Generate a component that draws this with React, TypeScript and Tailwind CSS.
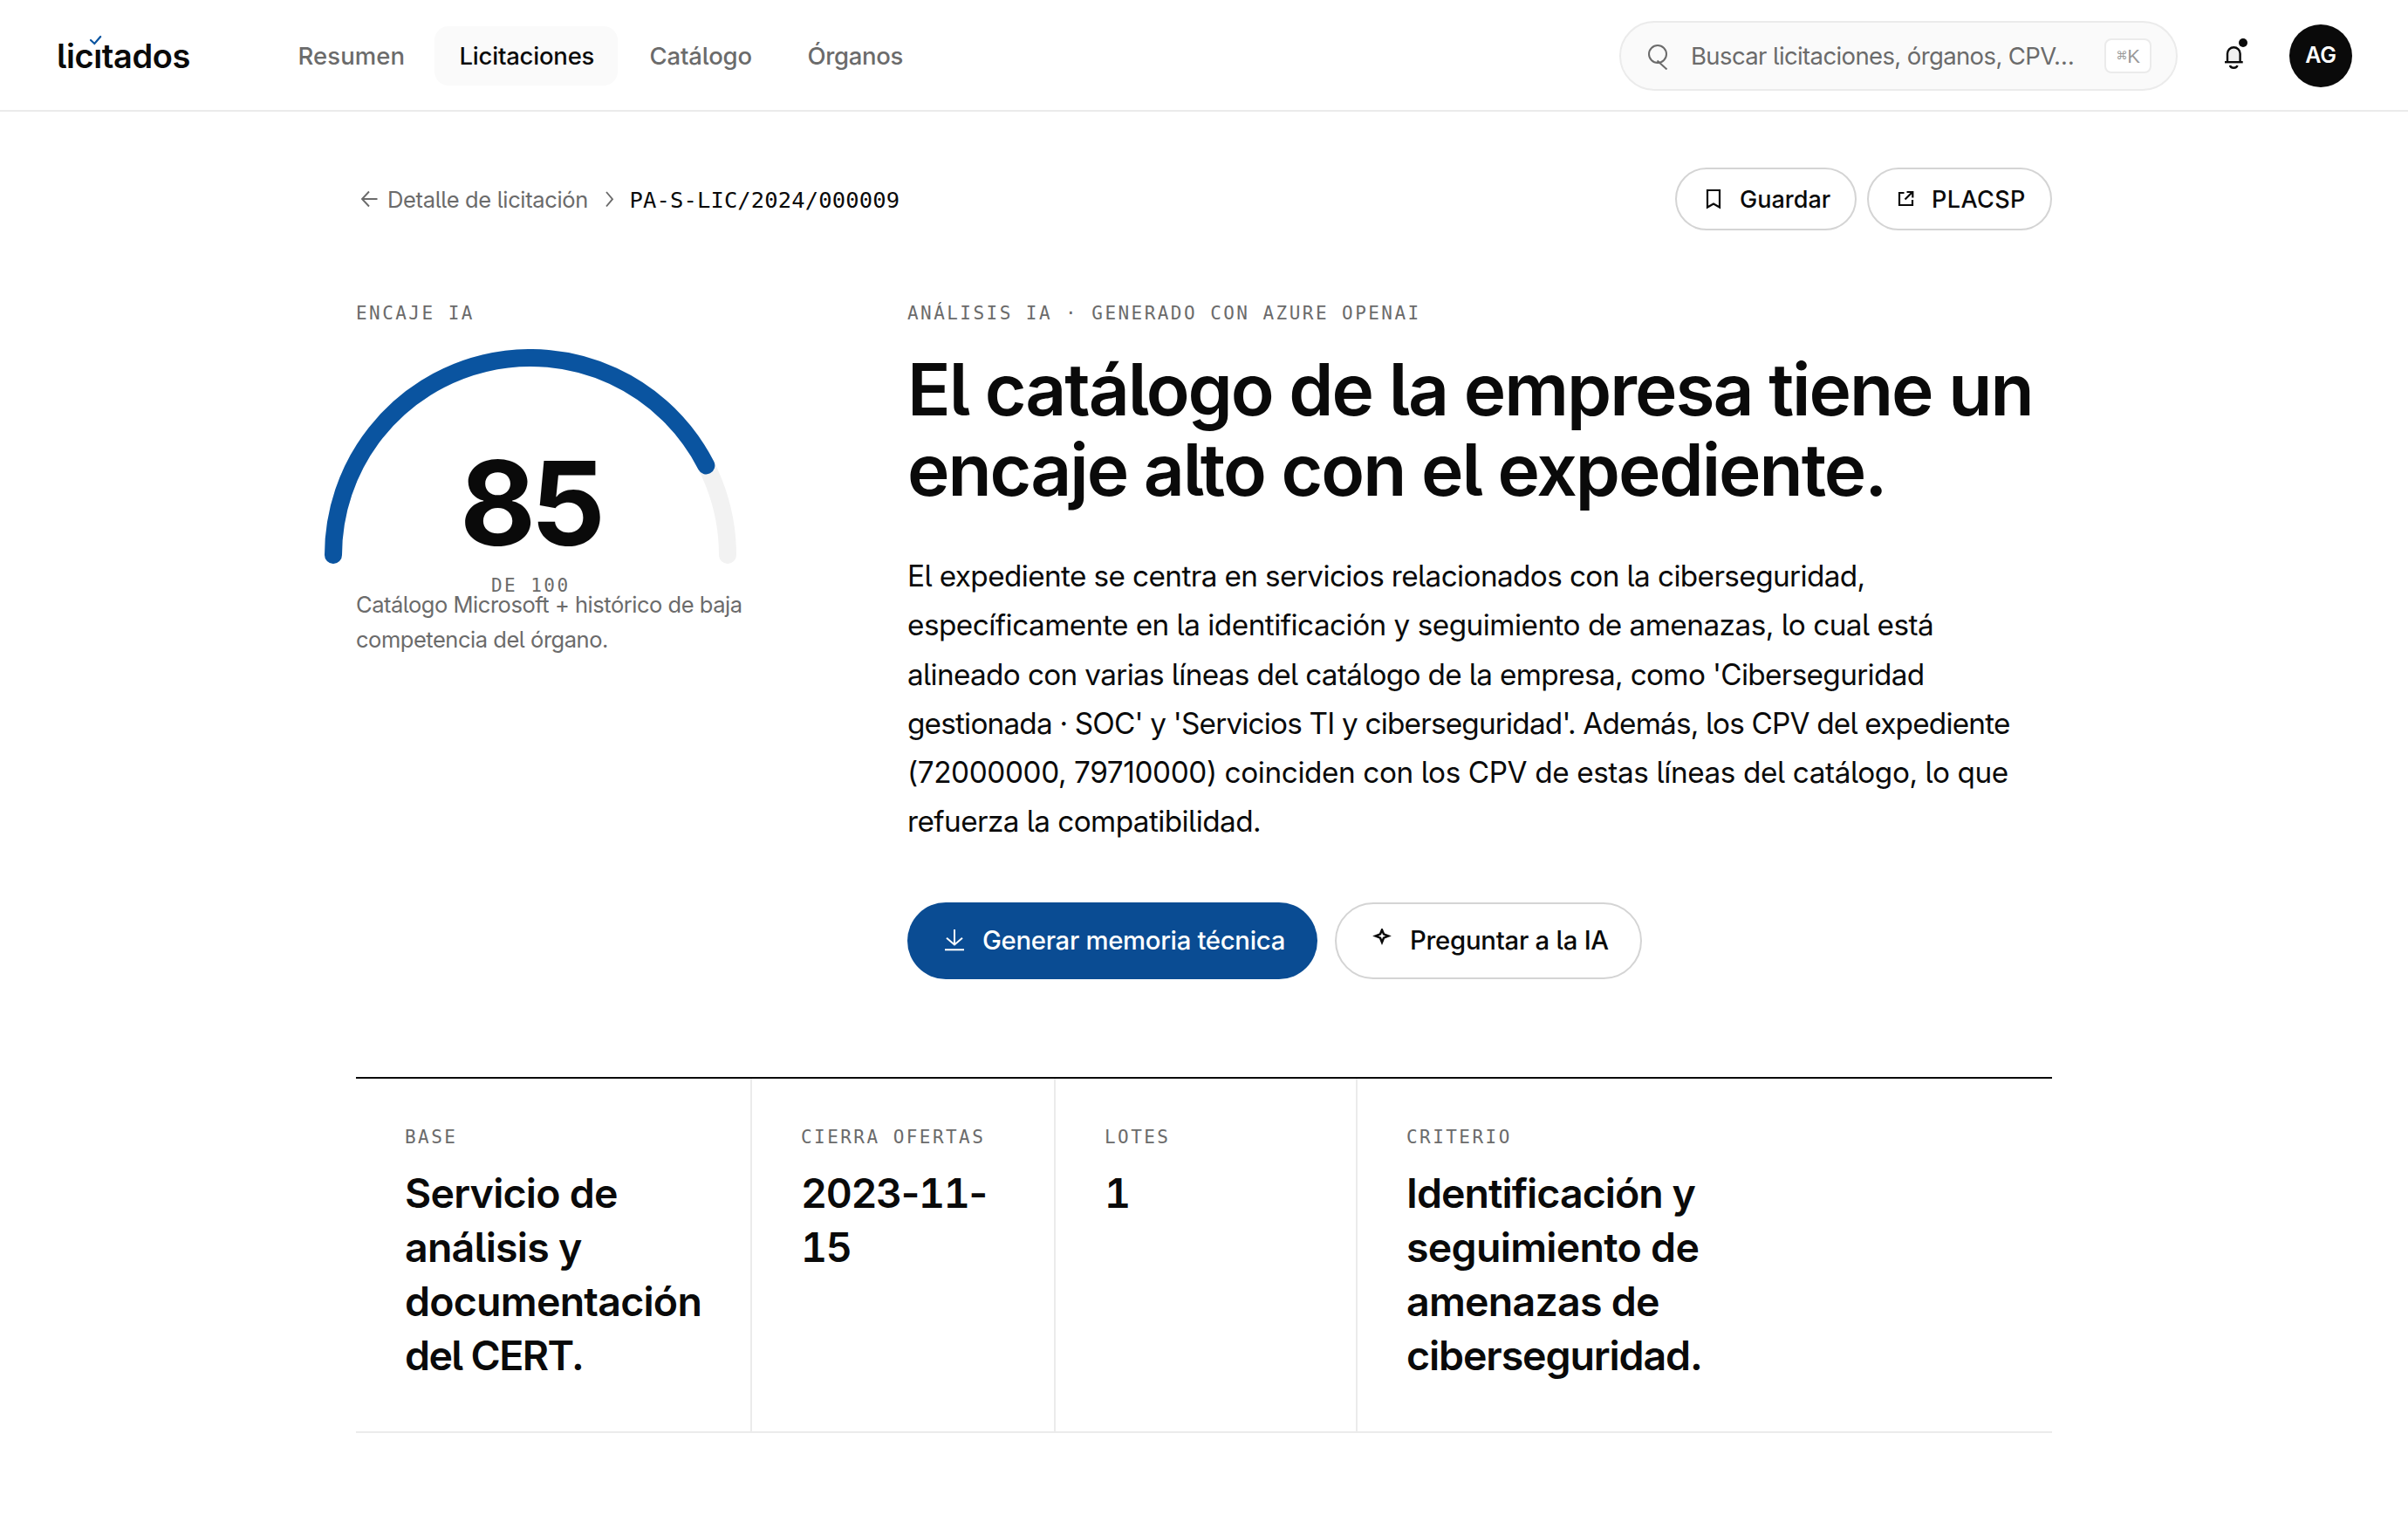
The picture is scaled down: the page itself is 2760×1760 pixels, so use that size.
import type { ReactNode } from "react";

type Stat = { label: string; lines: { text: string; track: string }[] };

const nav = [
  { label: "Resumen", active: false, css: "w-[177px] tracking-[0.003em]" },
  { label: "Licitaciones", active: true, css: "w-[210px] tracking-[-0.008em]" },
  { label: "Catálogo", active: false, css: "w-[173px] tracking-[-0.005em]" },
  { label: "Órganos", active: false, css: "w-[166px] tracking-[-0.012em]" },
];

const analysis = [
  { text: "El expediente se centra en servicios relacionados con la ciberseguridad,", track: "tracking-[-0.0182em]" },
  { text: "específicamente en la identificación y seguimiento de amenazas, lo cual está", track: "tracking-[-0.0154em]" },
  { text: "alineado con varias líneas del catálogo de la empresa, como 'Ciberseguridad", track: "tracking-[-0.0196em]" },
  { text: "gestionada · SOC' y 'Servicios TI y ciberseguridad'. Además, los CPV del expediente", track: "tracking-[-0.0239em]" },
  { text: "(72000000, 79710000) coinciden con los CPV de estas líneas del catálogo, lo que", track: "tracking-[-0.0118em]" },
  { text: "refuerza la compatibilidad.", track: "tracking-[-0.017em]" },
];

const stats: Stat[] = [
  {
    label: "Base",
    lines: [
      { text: "Servicio de", track: "tracking-[-0.0165em]" },
      { text: "análisis y", track: "tracking-[-0.0165em]" },
      { text: "documentación", track: "tracking-[-0.0165em]" },
      { text: "del CERT.", track: "tracking-[-0.0349em]" },
    ],
  },
  {
    label: "Cierra ofertas",
    lines: [
      { text: "2023-11-", track: "tracking-[-0.03em]" },
      { text: "15", track: "tracking-[-0.03em]" },
    ],
  },
  { label: "Lotes", lines: [{ text: "1", track: "tracking-normal" }] },
  {
    label: "Criterio",
    lines: [
      { text: "Identificación y", track: "tracking-[-0.0205em]" },
      { text: "seguimiento de", track: "tracking-[-0.0155em]" },
      { text: "amenazas de", track: "tracking-[-0.0162em]" },
      { text: "ciberseguridad.", track: "tracking-[-0.0241em]" },
    ],
  },
];

function Icon({ size, width = 2, className = "", children }: { size: number; width?: number; className?: string; children: ReactNode }) {
  return (
    <svg
      width={size}
      height={size}
      viewBox={`0 0 ${size} ${size}`}
      fill="none"
      stroke="currentColor"
      strokeWidth={width}
      className={`shrink-0 ${className}`}
    >
      {children}
    </svg>
  );
}

function Eyebrow({ children, className = "" }: { children: ReactNode; className?: string }) {
  return (
    <div
      className={`font-['DejaVu_Sans_Mono',monospace] text-[21px] leading-8 tracking-[2.45px] whitespace-pre text-[#6b6b6b] uppercase ${className}`}
    >
      {children}
    </div>
  );
}

// Digits are tabular, dashes keep their natural width
function Figures({ text }: { text: string }) {
  return text.split(/(\d+)/).map((part, i) => (
    <span key={i} className={/\d/.test(part) ? "tabular-nums" : ""}>
      {part}
    </span>
  ));
}

function Header() {
  return (
    <header className="flex h-32 items-center border-b-2 border-[#ebebeb] px-16 pt-0.5">
      <div className="relative w-[249px] pl-px text-[38px] leading-none font-semibold tracking-[-0.01em]">
        licıtados
        <svg className="absolute top-[-6px] left-[38px]" width="16" height="14" viewBox="0 0 16 14" fill="none" stroke="#0a54a0" strokeWidth="2.2">
          <path d="M2 7 6.3 11 13.2 3" strokeLinecap="round" />
        </svg>
      </div>
      <nav className="flex gap-2 text-[27.5px] font-medium">
        {nav.map((n) => (
          <a
            key={n.label}
            className={`flex h-[68px] items-center rounded-2xl pt-px pl-[28.5px] ${n.css} ${
              n.active ? "bg-[#fafafa] text-[#0a0a0a]" : "text-[#6b6b6b]"
            }`}
          >
            {n.label}
          </a>
        ))}
      </nav>
      <div className="ml-auto flex h-20 w-[640px] items-center rounded-full border-2 border-[#ebebeb] bg-[#fafafa] pr-7 pl-[26px] text-[#6b6b6b]">
        <Icon size={32}>
          <circle cx="16" cy="14" r="10" />
          <path d="M15.5 21.5 26.5 31.5" />
        </Icon>
        <span className="ml-[22px] pt-px text-[27.5px] tracking-[-0.0225em]">Buscar licitaciones, órganos, CPV…</span>
        <kbd className="ml-auto flex h-10 w-[54px] items-center justify-center rounded-lg border-2 border-[#ebebeb] bg-white text-[#999999]">
          <span className="font-['DejaVu_Sans',sans-serif] text-[13px]">⌘</span>
          <span className="font-['Liberation_Sans_Narrow','Liberation_Sans',sans-serif] text-[22px] font-light">K</span>
        </kbd>
      </div>
      <div className="relative ml-12 h-9 w-9">
        <Icon size={36} width={2.4}>
          <path d="M9 25V15.5a7.3 7.3 0 0 1 14.6 0V25" fill="#f0f0f0" />
          <path d="M6 25.2H26.7" />
          <path d="M12 29c.6 3.6 7.8 3.6 8.4 0" />
        </Icon>
        <span className="absolute top-[-2px] left-[22px] size-2.5 rounded-full bg-[#0a0a0a]" />
      </div>
      <div className="ml-11 flex size-[72px] items-center justify-center rounded-full bg-[#0a0a0a] text-[25px] font-semibold tracking-[-0.01em] text-white">
        AG
      </div>
    </header>
  );
}

// Half-circle gauge, r=226 around (236,236)
function Gauge({ score }: { score: number }) {
  const a = Math.PI * (1 - score / 100);
  const x = 236 + 226 * Math.cos(a);
  const y = 236 - 226 * Math.sin(a);
  return (
    <div className="relative mt-[25px] -ml-9 h-[273px] w-[472px]">
      <svg width="472" height="246" viewBox="0 0 472 246" fill="none" strokeWidth="20" strokeLinecap="round">
        <path d="M10 236A226 226 0 0 1 462 236" stroke="#f2f2f2" />
        <path d={`M10 236A226 226 0 0 1 ${x} ${y}`} stroke="#0a54a0" />
      </svg>
      <div className="absolute top-[109px] left-[155px] text-[134px] leading-[134px] font-[650] tracking-[-0.045em]">
        {score}
      </div>
      <Eyebrow className="absolute top-[255px] left-[191px]">de 100</Eyebrow>
    </div>
  );
}

export default function App() {
  return (
    <div className="min-h-[1760px] bg-white font-['Inter',sans-serif] text-[#0a0a0a] [font-feature-settings:'cv05']">
      <Header />

      <main className="mx-auto w-[1944px] pt-16">
        <div className="flex h-[72px] items-center text-[#6b6b6b]">
          <Icon size={24} width={1.9} className="ml-1">
            <path d="M3 12H20.5M11 3.5 3 12 11 20.5" />
          </Icon>
          <span className="ml-2 w-[230px] pt-0.5 text-[25.5px] tracking-[-0.0135em] whitespace-nowrap">Detalle de licitación</span>
          <Icon size={24} width={1.9} className="ml-3">
            <path d="M9 4 16 12.2 9 20.5" />
          </Icon>
          <span className="ml-[11.5px] pt-0.5 font-['DejaVu_Sans_Mono',monospace] text-[25.5px] tracking-[0.13px] text-[#0a0a0a]">
            PA-S-LIC/2024/000009
          </span>
          <div className="ml-auto flex gap-3 text-[27px] font-medium text-[#0a0a0a]">
            <button className="flex h-[72px] w-[208px] items-center gap-[18px] rounded-full border-2 border-[#d4d4d4] pl-[30px]">
              <Icon size={24} width={2.2}>
                <path d="M5 2H19V21.5L12 17.5 5 21.5Z" />
              </Icon>
              <span className="pt-0.5">Guardar</span>
            </button>
            <button className="flex h-[72px] w-[212px] items-center gap-[18px] rounded-full border-2 border-[#d4d4d4] pl-[30px] tracking-[0.015em]">
              <Icon size={24} width={2.2}>
                <path d="M10.5 5H5V19H20V13M11.5 12.5 19.5 4.5M13.5 4H20.3V10.5" />
              </Icon>
              <span className="pt-0.5">PLACSP</span>
            </button>
          </div>
        </div>

        <section className="mt-[79px] flex">
          <div className="w-[632px]">
            <Eyebrow>Encaje IA</Eyebrow>
            <Gauge score={85} />
            <p className="text-[25.5px] leading-10 tracking-[-0.0185em] text-[#6b6b6b]">
              Catálogo Microsoft + histórico de baja
              <br />
              competencia del órgano.
            </p>
          </div>
          <div className="flex-1">
            <Eyebrow>Análisis IA · Generado con Azure OpenAI</Eyebrow>
            <h1 className="mt-[26px] text-[82px] leading-[92px] font-semibold tracking-[-0.0246em] whitespace-nowrap">
              El catálogo de la empresa tiene un
              <br />
              encaje alto con el expediente.
            </h1>
            <p className="mt-[47px] text-[33.3px] leading-[56.3px] whitespace-nowrap">
              {analysis.map((l) => (
                <span key={l.text} className={`block ${l.track}`}>
                  {l.text}
                </span>
              ))}
            </p>
            <div className="mt-16 flex gap-5 text-[29.3px] font-medium">
              <button className="flex h-[88px] w-[470px] items-center gap-[18px] rounded-full bg-[#0a4c93] pl-10 tracking-[-0.0105em] text-white">
                <Icon size={28}>
                  <path d="M14 1V18.5M5 10.8 14 18.5 23 10.8M3 24.3H25" />
                </Icon>
                Generar memoria técnica
              </button>
              <button className="flex h-[88px] w-[352px] items-center gap-[18px] rounded-full border-2 border-[#d4d4d4] pl-[38px] tracking-[-0.0085em]">
                <Icon size={28} width={2.5}>
                  <path d="M14 1.5 16 6.3 21.5 8.5 16 10.7 14 15.6 12 10.7 6.5 8.5 12 6.3Z" />
                </Icon>
                Preguntar a la IA
              </button>
            </div>
          </div>
        </section>

        <section className="mt-[112px] grid grid-cols-[454px_348px_346px_1fr] border-t-2 border-b-2 border-t-[#0a0a0a] border-b-[#ebebeb]">
          {stats.map((s, i) => (
            <div key={s.label} className={`pt-[51px] pb-14 pl-14 ${i < 3 ? "border-r-2 border-[#ebebeb]" : ""}`}>
              <Eyebrow>{s.label}</Eyebrow>
              <div className="mt-[17px] text-[46.5px] leading-[62px] font-semibold whitespace-nowrap">
                {s.lines.map((l) => (
                  <div key={l.text} className={l.track}>
                    <Figures text={l.text} />
                  </div>
                ))}
              </div>
            </div>
          ))}
        </section>
      </main>
    </div>
  );
}
